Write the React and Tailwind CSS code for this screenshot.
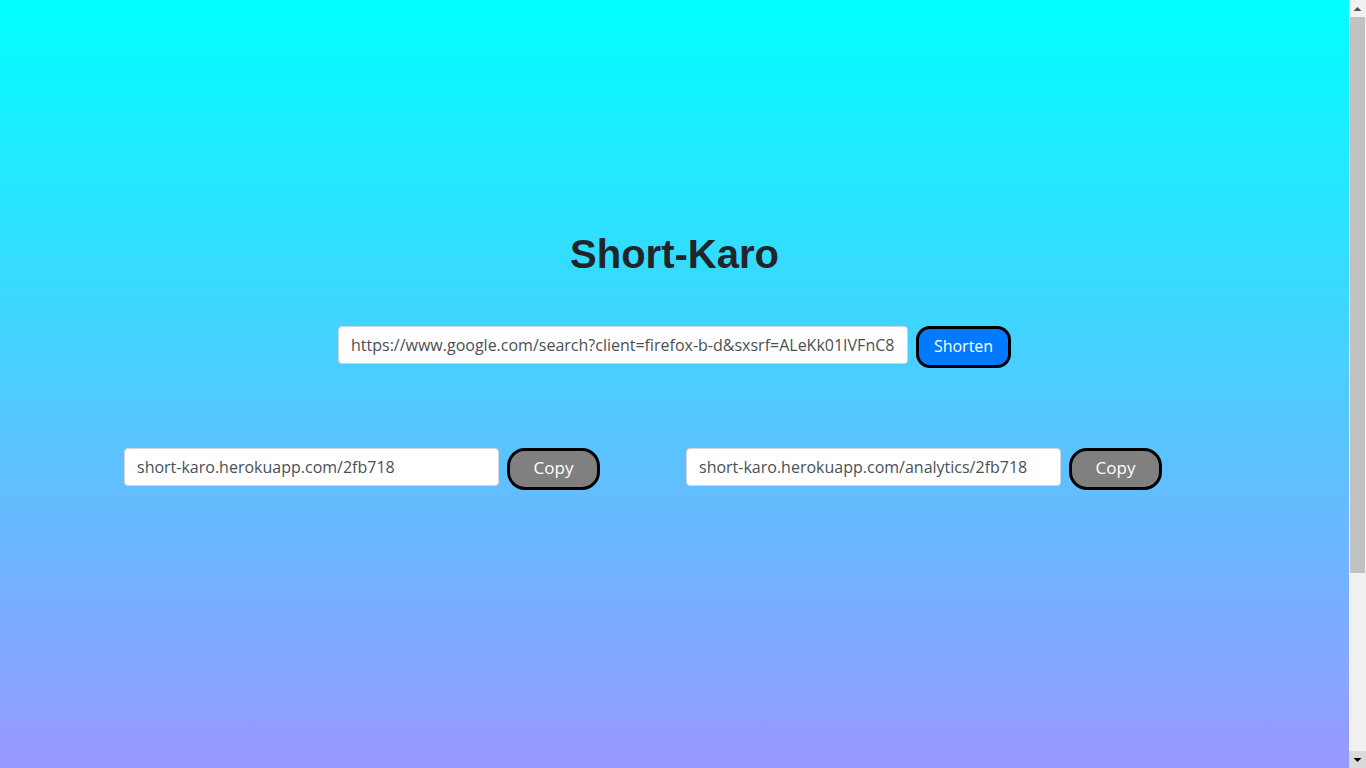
import React, { useState } from "react";

const longUrl =
  "https://www.google.com/search?client=firefox-b-d&sxsrf=ALeKk01IVFnC8fJ2xQ&ei=shortkaro&q=url+shortener";

function UrlBox({ value, width, onChange }) {
  return (
    <input
      className={`${width} h-[38px] rounded border border-[#ced4da] bg-white px-3 pb-[1px] text-base text-[#495057] outline-none font-['Open_Sans',sans-serif]`}
      value={value}
      onChange={onChange}
      readOnly={!onChange}
    />
  );
}

function PillButton({ children, color, width, extra }) {
  return (
    <button
      className={`${width} ${color} ${extra} h-[42px] pb-[3px] border-[3px] border-black text-white font-['Open_Sans',sans-serif]`}
    >
      {children}
    </button>
  );
}

// page scrollbar, drawn as in the screenshot
function Scrollbar() {
  return (
    <div className="flex w-[17px] shrink-0 flex-col bg-[#f1f1f1]">
      <div className="flex h-[17px] items-center justify-center">
        <svg width="9" height="6" viewBox="0 0 9 6">
          <path d="M0.5 5 L4.5 1 L8.5 5 Z" fill="#505050" />
        </svg>
      </div>
      <div className="mx-[1px] h-[556px] bg-[#c1c1c1]" />
      <div className="flex-1" />
      <div className="flex h-[17px] items-center justify-center bg-[#dadada]">
        <svg width="9" height="6" viewBox="0 0 9 6">
          <path d="M0.5 1 L4.5 5 L8.5 1 Z" fill="#000000" />
        </svg>
      </div>
    </div>
  );
}

export default function App() {
  const [url, setUrl] = useState(longUrl);

  return (
    <div className="flex h-screen">
      <div className="flex-1 overflow-hidden">
        <div className="h-[1014px] bg-[linear-gradient(to_bottom,#00ffff,#ca78ff)]">
          <div className="pt-[230px]">
            <h1 className="text-center text-[40px] leading-[48px] font-bold text-[#212529] font-['Liberation_Sans',Arial,sans-serif]">
              Short-Karo
            </h1>

            <div className="mt-[48px] flex items-start justify-center gap-2">
              <UrlBox value={url} width="w-[570px]" onChange={(e) => setUrl(e.target.value)} />
              <PillButton color="bg-[#007bff]" width="w-[95px]" extra="rounded-[14px] text-base">
                Shorten
              </PillButton>
            </div>

            <div className="mt-[80px] flex items-start pl-[124px] gap-[86px]">
              <div className="flex items-start gap-2">
                <UrlBox value="short-karo.herokuapp.com/2fb718" width="w-[375px]" />
                <PillButton color="bg-[#808080]" width="w-[93px]" extra="rounded-[18px] text-[17px]">
                  Copy
                </PillButton>
              </div>
              <div className="flex items-start gap-2">
                <UrlBox value="short-karo.herokuapp.com/analytics/2fb718" width="w-[375px]" />
                <PillButton color="bg-[#808080]" width="w-[93px]" extra="rounded-[18px] text-[17px]">
                  Copy
                </PillButton>
              </div>
            </div>
          </div>
        </div>
      </div>
      <Scrollbar />
    </div>
  );
}
